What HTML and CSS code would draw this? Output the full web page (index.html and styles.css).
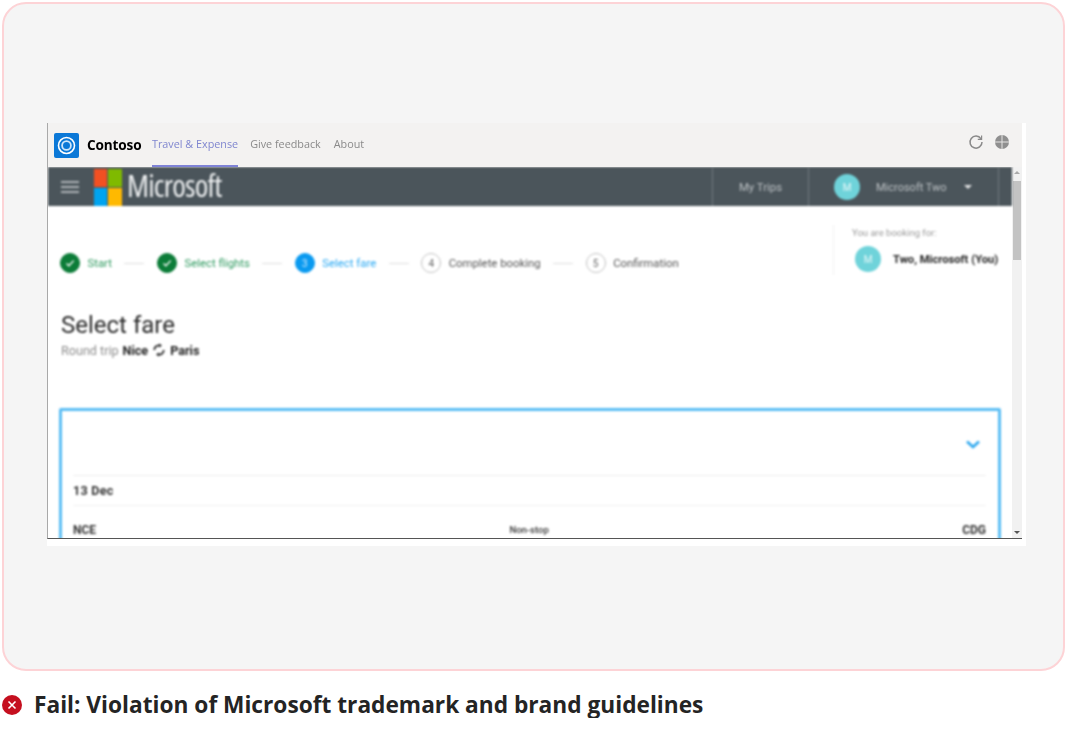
FILE: index.html
```html
<!DOCTYPE html>
<html lang="en">
<head>
    <meta charset="UTF-8">
    <meta name="viewport" content="width=device-width, initial-scale=1.0">
    <title>Fail: Violation of Microsoft trademark and brand guidelines</title>
    <link rel="stylesheet" href="styles.css">
</head>
<body>
    <div class="example-card">
        <div class="shot">
            <div class="app-bar">
                <svg class="app-logo" viewBox="0 0 25 25">
                    <rect width="25" height="25" rx="2" fill="#0b78d7"/>
                    <circle cx="12.5" cy="12.5" r="8" fill="none" stroke="#fff" stroke-width="1.6"/>
                    <circle cx="12.5" cy="12.5" r="4.4" fill="none" stroke="#cfe6fa" stroke-width="1.8"/>
                </svg>
                <span class="app-name">Contoso</span>
                <a class="app-tab active">Travel &amp; Expense</a>
                <a class="app-tab">Give feedback</a>
                <a class="app-tab">About</a>
                <div class="app-icons">
                    <svg width="16" height="16" viewBox="0 0 16 16" fill="none" stroke="#8a8a8a" stroke-width="1.5">
                        <path d="M13 4.8A6 6 0 1 0 14 8"/>
                        <path d="M13.6 1.5v3.8H9.8" stroke-width="1.2"/>
                    </svg>
                    <svg width="16" height="16" viewBox="0 0 16 16" fill="#8f8f8f" stroke="#e4e3e2" stroke-width="1">
                        <circle cx="8" cy="8" r="7" stroke="none"/>
                        <path d="M8 1v14M1 8h14" fill="none"/>
                    </svg>
                </div>
            </div>
            <div class="viewport">
                <div class="page">
                    <nav class="top-nav">
                        <div class="burger"><i></i><i></i><i></i></div>
                        <div class="ms-logo"><i class="red"></i><i class="green"></i><i class="blue"></i><i class="yellow"></i></div>
                        <span class="ms-word">Microsoft</span>
                        <div class="nav-item trips">My Trips</div>
                        <div class="nav-item user">
                            <span class="avatar">M</span>
                            <span class="user-name">Microsoft Two</span>
                            <span class="caret"></span>
                        </div>
                        <div class="nav-item nav-end"></div>
                    </nav>
                    <div class="head-row">
                        <ol class="steps">
                            <li class="step done"><span class="dot"><svg width="10" height="10" viewBox="0 0 10 10" fill="none" stroke="#fff" stroke-width="1.3"><path d="M1.5 5.5l2.4 2.3 4.8-5.2"/></svg></span>Start</li>
                            <li class="step-line"></li>
                            <li class="step done"><span class="dot"><svg width="10" height="10" viewBox="0 0 10 10" fill="none" stroke="#fff" stroke-width="1.3"><path d="M1.5 5.5l2.4 2.3 4.8-5.2"/></svg></span>Select flights</li>
                            <li class="step-line"></li>
                            <li class="step current"><span class="dot">3</span>Select fare</li>
                            <li class="step-line"></li>
                            <li class="step"><span class="dot">4</span>Complete booking</li>
                            <li class="step-line"></li>
                            <li class="step"><span class="dot">5</span>Confirmation</li>
                        </ol>
                        <div class="booking-for">
                            <div class="booking-label">You are booking for:</div>
                            <div class="booking-person"><span class="avatar">M</span><b>Two, Microsoft (You)</b></div>
                        </div>
                    </div>
                    <h1 class="page-title">Select fare</h1>
                    <p class="trip-line">Round trip <b>Nice</b>
                        <svg width="14" height="14" viewBox="0 0 14 14" fill="none" stroke="#222" stroke-width="1.8"><path d="M2.300 7A4.700 4.700 0 0 1 7 2.300"/><path d="M11.700 7A4.700 4.700 0 0 1 7 11.700"/><path d="M7 .5L10 2.500 7 4.500z" fill="#222" stroke="none"/><path d="M7 9.500L4 11.500 7 13.500z" fill="#222" stroke="none"/></svg>
                        <b>Paris</b></p>
                    <div class="fare-card">
                        <div class="fare-toggle">
                            <svg width="14" height="9" viewBox="0 0 14 9" fill="none" stroke="#2fa8ee" stroke-width="2.6"><path d="M1 1.500l6 5.500 6-5.500"/></svg>
                        </div>
                        <div class="fare-date">13 Dec</div>
                        <div class="fare-route"><b>NCE</b><span>Non-stop</span><b>CDG</b></div>
                    </div>
                </div>
                <div class="scrollbar">
                    <span class="arrow up"></span>
                    <span class="thumb"></span>
                    <span class="arrow down"></span>
                </div>
            </div>
        </div>
    </div>
    <p class="verdict">
        <svg width="20" height="20" viewBox="0 0 20 20"><circle cx="10" cy="10" r="10" fill="#c50f1f"/><path d="M6.500 6.500l7 7M13.500 6.500l-7 7" stroke="#fff" stroke-width="1.600"/></svg>
        Fail: Violation of Microsoft trademark and brand guidelines
    </p>
</body>
</html>
```

FILE: styles.css
```css
* {
    box-sizing: border-box;
}
body {
    margin: 0;
    background-color: #fff;
    font-family: Roboto, Arial, sans-serif;
    overflow: hidden;
}
.example-card {
    width: 1063px;
    height: 669px;
    margin: 2px 0 0 2px;
    padding: 119px 0 0 43px;
    background-color: #f5f5f5;
    border: 2px solid #fdd3d6;
    border-radius: 24px;
}
.shot {
    width: 979px;
    height: 423px;
    padding-right: 4px;
    background-color: #fff;
}
.app-bar {
    display: flex;
    align-items: center;
    height: 44px;
    padding: 0 12px 0 6px;
    background-color: #f3f2f1;
    border-left: 1px solid #a9a9a9;
    font-family: "Open Sans", Arial, sans-serif;
    filter: blur(.5px);
}
.app-logo {
    width: 25px;
    height: 25px;
    flex: none;
}
.app-name {
    margin: 0 0 2px 8px;
    font-size: 13.6px;
    font-weight: 700;
    letter-spacing: -.15px;
    color: #000;
}
.app-tab {
    display: flex;
    align-items: center;
    height: 44px;
    margin-left: 12px;
    padding-bottom: 2px;
    font-size: 10.8px;
    color: #8a8a8a;
    border-bottom: 2px solid transparent;
}
.app-tab.active {
    margin-left: 10.500px;
    color: #7f86cf;
    border-bottom-color: #7f83d6;
}
.app-tab:last-of-type {
    margin-left: 13px;
}
.app-icons {
    display: flex;
    gap: 10px;
    margin-left: auto;
    margin-bottom: 6px;
}
.viewport {
    display: flex;
    height: 372px;
    border-left: 1px solid #a9a9a9;
    border-bottom: 1px solid #555;
    overflow: hidden;
}
.page {
    flex: 1;
    min-width: 0;
    filter: blur(.85px);
}
.top-nav {
    display: flex;
    align-items: center;
    height: 39px;
    padding-left: 13px;
    background-color: #4b555b;
    border-top: 1px solid #3d464b;
    color: #bcc1c4;
    font-size: 11px;
}
.burger {
    width: 18px;
    margin-right: 15px;
}
.burger i {
    display: block;
    height: 2px;
    margin: 3px 0;
    background-color: #aeb4b7;
}
.ms-logo {
    display: grid;
    grid-template-columns: 13px 14px;
    grid-template-rows: 18px 18px;
    gap: 1px;
    width: 28px;
    flex: none;
}
.ms-logo .red { background-color: #f25022; }
.ms-logo .green { background-color: #7fba00; }
.ms-logo .blue { background-color: #00a4ef; }
.ms-logo .yellow { background-color: #ffb900; }
.ms-word {
    flex: none;
    margin: 0 0 3px 5px;
    font-family: "Open Sans", Arial, sans-serif;
    font-size: 31px;
    font-stretch: 75%;
    line-height: 35px;
    letter-spacing: -.8px;
    white-space: nowrap;
    color: #eceeef;
}
.nav-item {
    display: flex;
    align-items: center;
    height: 38px;
    border-left: 1px solid #717a80;
}
.trips {
    justify-content: center;
    width: 96px;
    margin-left: auto;
    font-size: 11.4px;
}
.user {
    width: 190px;
    padding-left: 25px;
}
.nav-end {
    width: 14px;
}
.avatar {
    display: flex;
    align-items: center;
    justify-content: center;
    width: 26px;
    height: 26px;
    flex: none;
    border-radius: 50%;
    background-color: #6fd3da;
    color: #e8f8f9;
    font-size: 10px;
}
.user-name {
    margin-left: 16px;
}
.caret {
    margin-left: 17px;
    border: 4px solid transparent;
    border-top-color: #e3e5e6;
    border-bottom-width: 0;
}
.head-row {
    display: flex;
    justify-content: space-between;
    padding: 19px 13px 0 12px;
}
.steps {
    display: flex;
    align-items: center;
    height: 50px;
    margin: 0;
    padding: 26px 0 0;
    list-style: none;
    gap: 12.500px;
    font-size: 11.350px;
    color: #555;
}
.step {
    display: flex;
    align-items: center;
    gap: 7.500px;
}
.step .dot {
    display: flex;
    align-items: center;
    justify-content: center;
    width: 20px;
    height: 20px;
    border-radius: 50%;
    border: 1.5px solid #c0c0c0;
    font-size: 10px;
    color: #666;
}
.step.done {
    color: #2f9a60;
}
.step.done .dot {
    background-color: #0c7c38;
    border-color: #0c7c38;
}
.step.current {
    color: #2aa9f3;
}
.step.current .dot {
    background-color: #0a9af0;
    border-color: #0a9af0;
    color: #cfeaff;
}
.step-line {
    width: 20px;
    height: 1px;
    background-color: #ddd;
}
.booking-for {
    width: 166px;
    height: 50px;
    padding: 2px 0 0 18px;
    border-left: 1px solid #f2f2f2;
}
.booking-label {
    font-size: 9.5px;
    color: #999;
}
.booking-person {
    display: flex;
    align-items: center;
    gap: 12px;
    margin-top: 8px;
    margin-left: 3px;
    font-size: 11.2px;
    white-space: nowrap;
    color: #222;
}
.page-title {
    margin: 35px 0 0 13px;
    font-size: 24px;
    font-weight: 400;
    line-height: 30px;
    color: #2b2b2b;
}
.trip-line {
    display: flex;
    align-items: center;
    gap: 4px;
    height: 16px;
    margin: 2px 0 0 13px;
    font-size: 12.600px;
    color: #8c8c8c;
}
.trip-line b {
    color: #222;
}
.fare-card {
    height: 150px;
    margin: 50px 11px 0;
    padding: 0 12px 0 11px;
    border: 3px solid #59bdf4;
    border-radius: 2px;
}
.fare-toggle {
    display: flex;
    justify-content: flex-end;
    height: 65px;
    padding: 29px 6px 0 0;
    border-bottom: 1px solid #eee;
}
.fare-date {
    height: 30px;
    border-bottom: 1px solid #f1f1f1;
    font-size: 12.500px;
    font-weight: 700;
    line-height: 30px;
    letter-spacing: .3px;
    color: #333;
}
.fare-route {
    display: flex;
    align-items: center;
    justify-content: space-between;
    padding-top: 17px;
    font-size: 12px;
    color: #333;
}
.fare-route span {
    margin-top: -2px;
    font-size: 9.5px;
    font-weight: 500;
}
.scrollbar {
    display: flex;
    flex-direction: column;
    align-items: center;
    width: 10px;
    flex: none;
    background-color: #f1f1f1;
}
.arrow {
    border: 3px solid transparent;
}
.arrow.up {
    margin-top: 4px;
    border-top-width: 0;
    border-bottom-color: #aaa;
}
.arrow.down {
    margin-top: auto;
    margin-bottom: 4px;
    border-bottom-width: 0;
    border-top-color: #555;
}
.thumb {
    width: 8px;
    height: 79px;
    margin-top: 7px;
    background-color: #c3c3c3;
}
.verdict {
    display: flex;
    align-items: center;
    gap: 12px;
    margin: 20.500px 0 0 2px;
    font-family: "Open Sans", Arial, sans-serif;
    font-size: 22.7px;
    font-weight: 700;
    line-height: 26px;
    color: #242424;
}
```
